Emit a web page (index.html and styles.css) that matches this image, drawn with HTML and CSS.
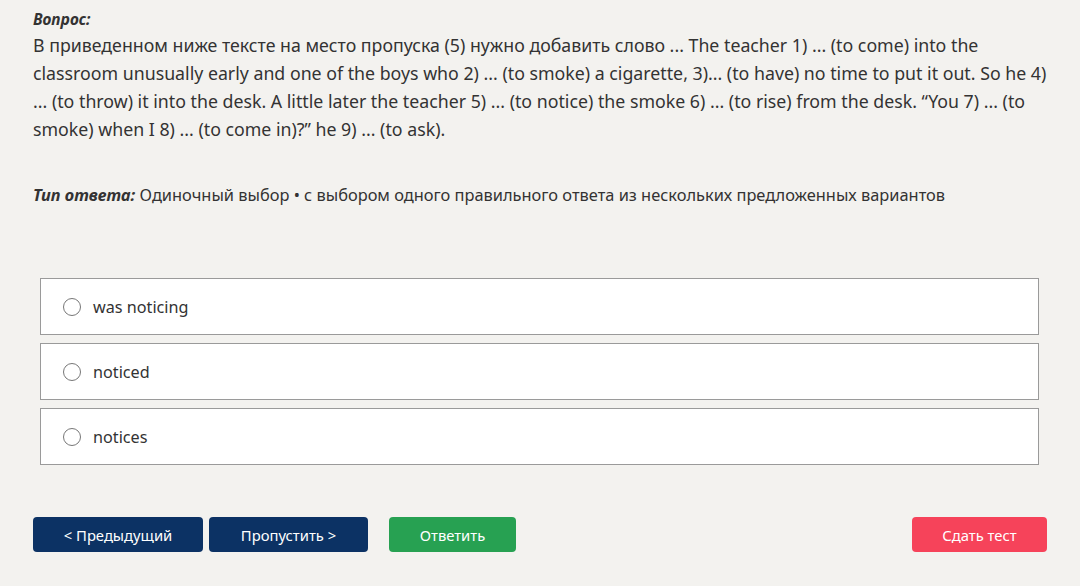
FILE: index.html
```html
<!DOCTYPE html>
<html lang="ru">
<head>
<meta charset="utf-8">
<link rel="stylesheet" href="styles.css">
</head>
<body>
<div class="page">
  <div class="question">
    <div class="label">Вопрос:</div>
    <p class="text">В приведенном ниже тексте на место пропуска (5) нужно добавить слово ... The teacher 1) ... (to come) into the classroom unusually early and one of the boys who 2) ... (to smoke) a cigarette, 3)... (to have) no time to put it out. So he 4) ... (to throw) it into the desk. A little later the teacher 5) ... (to notice) the smoke 6) ... (to rise) from the desk. “You 7) ... (to smoke) when I 8) ... (to come in)?” he 9) ... (to ask).</p>
  </div>
  <div class="type"><span class="type-label">Тип ответа:</span> Одиночный выбор • с выбором одного правильного ответа из нескольких предложенных вариантов</div>
  <div class="options">
    <label class="option"><span class="radio"></span><span>was noticing</span></label>
    <label class="option"><span class="radio"></span><span>noticed</span></label>
    <label class="option"><span class="radio"></span><span>notices</span></label>
  </div>
  <div class="actions">
    <div class="left">
      <button class="btn navy btn-prev">&lt; Предыдущий</button>
      <button class="btn navy btn-skip">Пропустить &gt;</button>
      <button class="btn green btn-answer">Ответить</button>
    </div>
    <button class="btn red btn-submit">Сдать тест</button>
  </div>
</div>
</body>
</html>
```
FILE: styles.css
```css
html, body {
  margin: 0;
  padding: 0;
  background: #f3f2ef;
}
body {
  font-family: "Noto Sans", "Open Sans", sans-serif;
  color: #333;
}
.page {
  width: 1014px;
  padding: 7px 0 0 33px;
}
.label {
  font-style: italic;
  font-weight: 700;
  font-size: 15.5px;
  line-height: 24px;
}
.text {
  margin: 0;
  font-size: 17.75px;
  line-height: 28px;
}
.type {
  margin-top: 40px;
  font-size: 16.4px;
  line-height: 24px;
}
.type-label {
  font-style: italic;
  font-weight: 700;
}
.options {
  margin: 71px 8px 0 7px;
  display: flex;
  flex-direction: column;
  gap: 8px;
}
.option {
  display: flex;
  align-items: center;
  height: 57px;
  box-sizing: border-box;
  background: #fff;
  border: 1px solid #9a9a9a;
  padding: 1px 0 0 22px;
  font-size: 16.2px;
}
.radio {
  width: 16px;
  height: 16px;
  border: 1px solid #777;
  border-radius: 50%;
  margin-right: 12px;
  background: #fff;
}
.actions {
  margin-top: 52px;
  display: flex;
  justify-content: space-between;
  align-items: center;
}
.left {
  display: flex;
  gap: 6px;
}
.btn {
  height: 35px;
  border: none;
  border-radius: 4px;
  color: #fff;
  font-family: "Noto Sans", sans-serif;
  font-size: 14.8px;
  padding: 0;
}
.navy { background: #0c3264; }
.green { background: #27a152; }
.red { background: #f6435a; }
.btn-prev { width: 170px; }
.btn-skip { width: 159px; }
.btn-answer { width: 127px; margin-left: 15px; }
.btn-submit { width: 135px; }
```
